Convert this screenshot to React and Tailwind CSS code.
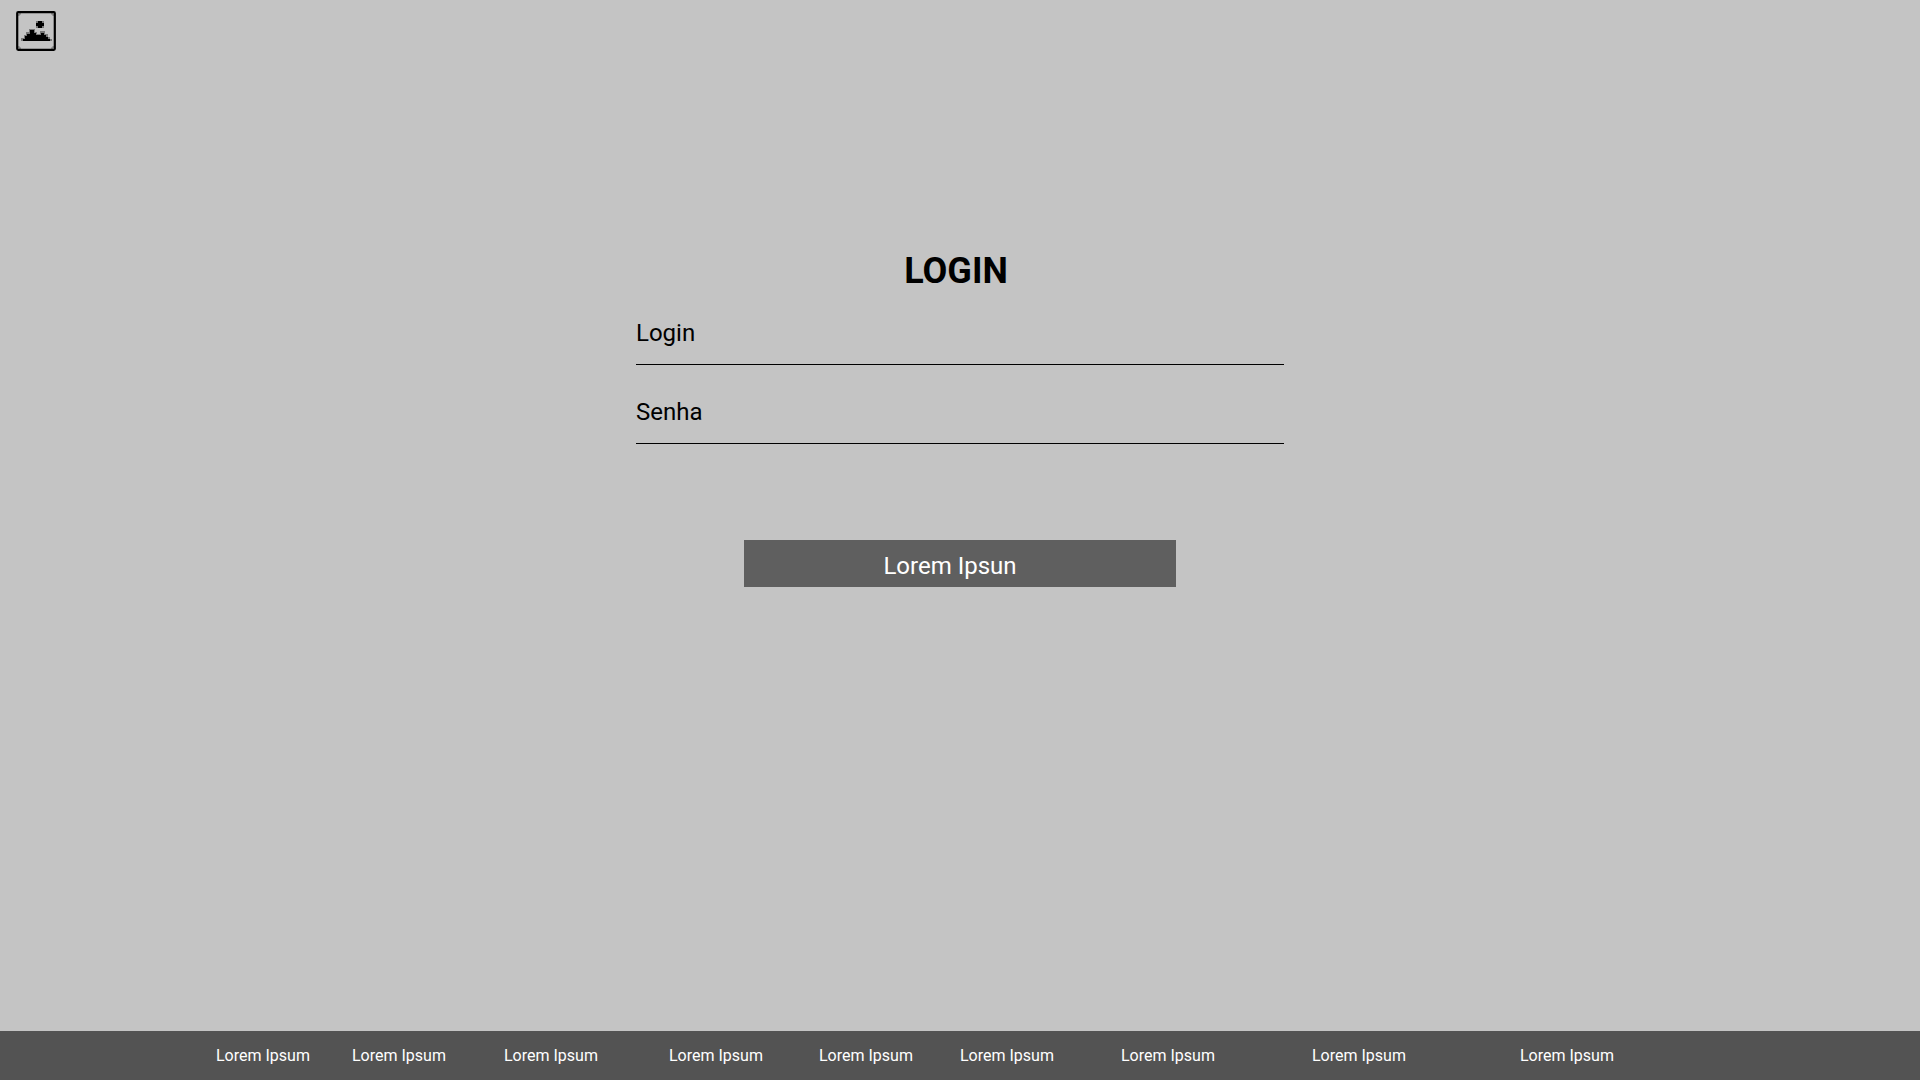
const fields = [
  { id: "login", label: "Login", type: "text" },
  { id: "senha", label: "Senha", type: "password" },
];

const footerLinks = Array.from({ length: 9 }, () => "Lorem Ipsum");

function PictureIcon() {
  return (
    <svg className="size-10" viewBox="0 0 40 40" fill="none" aria-hidden="true">
      <rect x="1.2" y="1.2" width="37.6" height="37.6" rx="1" stroke="#000" strokeWidth="2.2" />
      <path d="M2.8 5V2.8H5 M35 2.8H37.2V5 M37.2 35V37.2H35 M5 37.2H2.8V35" stroke="#555" strokeWidth="1" />
      <path
        d="M5 30V27H8V24H10V21H13V18H19V21H21V23H24V20H29V23H32V26H34V28H36V30Z"
        fill="#777"
      />
      <path
        d="M7 30V28H9V25H11V23H14V19H18V22H20V24H25V22H28V24H30V26H32V28H34V30Z"
        fill="#000"
      />
      <path d="M20 10H28V17H20Z" fill="#777" />
      <path d="M22 10H26V12H28V15H26V17H22V15H20V12H22Z" fill="#000" />
    </svg>
  );
}

export default function App() {
  return (
    <div className="flex min-h-screen flex-col bg-[#c4c4c4] font-[Roboto,sans-serif] text-black">
      <header className="flex px-4 pt-[11px]">
        <a href="#" aria-label="Home">
          <PictureIcon />
        </a>
      </header>

      <main className="flex flex-1 flex-col items-center px-4 pt-[200px]">
        <form className="flex w-full max-w-[648px] flex-col items-center">
          <h1 className="mb-[26px] pr-2 text-4xl font-bold">LOGIN</h1>
          <div className="flex w-full flex-col gap-[31px]">
            {fields.map((field) => (
              <input
                key={field.id}
                id={field.id}
                type={field.type}
                aria-label={field.label}
                placeholder={field.label}
                className="w-full border-b border-black bg-transparent pb-[15px] text-2xl outline-none placeholder:text-black placeholder:opacity-100"
              />
            ))}
          </div>
          <button
            type="button"
            className="mt-24 w-full max-w-[432px] bg-[#5f5f5f] pt-[10px] pr-5 pb-[5px] text-2xl text-white"
          >
            Lorem Ipsun
          </button>
        </form>
      </main>

      <footer className="bg-[#535353] pt-[13px] pb-3 text-base text-white">
        <nav className="grid grid-cols-[216fr_136fr_152fr_165fr_150fr_141fr_161fr_191fr_208fr_400fr]">
          <span />
          {footerLinks.map((label, index) => (
            <a key={index} href="#" className="whitespace-nowrap">
              {label}
            </a>
          ))}
        </nav>
      </footer>
    </div>
  );
}
